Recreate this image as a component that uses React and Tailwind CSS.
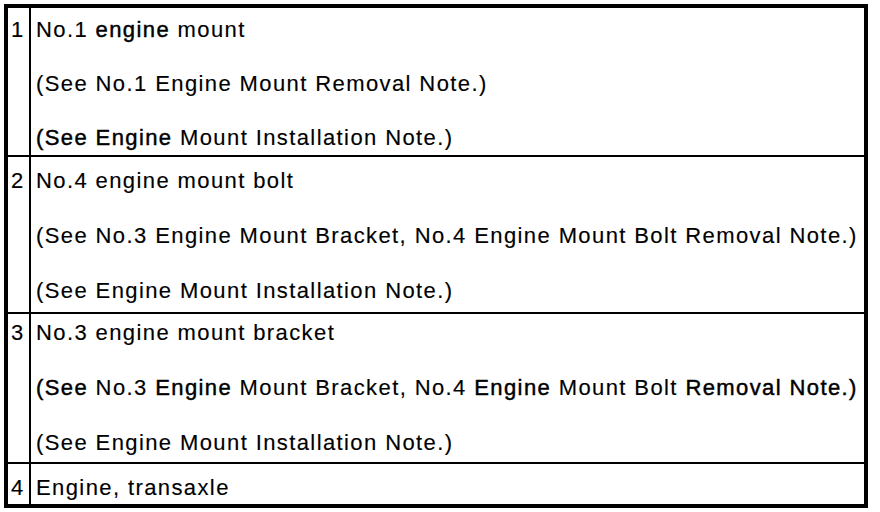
import React from "react";

// heavy = words that print a little darker in the source scan
const rows = [
  {
    num: "1",
    size: "h-[147px]",
    pad: "pt-[10px]",
    gap: "gap-[30px]",
    lines: [
      [["No.1 "], ["engine", true], [" mount"]],
      [["(See No.1 Engine Mount Removal Note.)"]],
      [["(See Engine", true], [" Mount Installation Note.)"]],
    ],
  },
  {
    num: "2",
    size: "h-[157px]",
    pad: "pt-3",
    gap: "gap-[31px]",
    lines: [
      [["No.4 engine mount bolt"]],
      [["(See No.3 Engine Mount Bracket, No.4 Engine Mount Bolt Removal Note.)"]],
      [["(See Engine Mount Installation Note.)"]],
    ],
  },
  {
    num: "3",
    size: "h-[150px]",
    pad: "pt-[7px]",
    gap: "gap-[31px]",
    lines: [
      [["No.3 engine mount bracket"]],
      [
        ["(See", true],
        [" No.3 "],
        ["Engine", true],
        [" Mount Bracket, No.4 "],
        ["Engine", true],
        [" Mount Bolt "],
        ["Removal Note.)", true],
      ],
      [["(See Engine Mount Installation Note.)"]],
    ],
  },
  {
    num: "4",
    size: "flex-1",
    pad: "pt-3",
    gap: "gap-0",
    lines: [[["Engine, transaxle"]]],
  },
];

const Line = ({ parts }) => (
  <div className="h-6 leading-6 whitespace-nowrap">
    {parts.map(([text, heavy], i) => (
      <span
        key={i}
        className={heavy ? "[-webkit-text-stroke:0.45px_black]" : "[-webkit-text-stroke:0.15px_black]"}
      >
        {text}
      </span>
    ))}
  </div>
);

export default function App() {
  return (
    <div className="w-[880px] h-[512px] bg-white p-1">
      <div
        className="w-[864px] h-[504px] border-4 border-black flex flex-col text-black text-[22px] tracking-[1.4px]"
        style={{ fontFamily: '"Liberation Sans", Arial, sans-serif' }}
      >
        {rows.map((row, i) => (
          <div
            key={row.num}
            className={`flex shrink-0 ${row.size} ${i > 0 ? "border-t-2 border-black" : ""}`}
          >
            <div className={`w-[23px] shrink-0 border-r-2 border-black pl-[3px] ${row.pad}`}>
              <div className="h-6 leading-6 [-webkit-text-stroke:0.15px_black]">{row.num}</div>
            </div>
            <div className={`flex-1 flex flex-col pl-[5px] ${row.gap} ${row.pad}`}>
              {row.lines.map((parts, j) => (
                <Line key={j} parts={parts} />
              ))}
            </div>
          </div>
        ))}
      </div>
    </div>
  );
}
